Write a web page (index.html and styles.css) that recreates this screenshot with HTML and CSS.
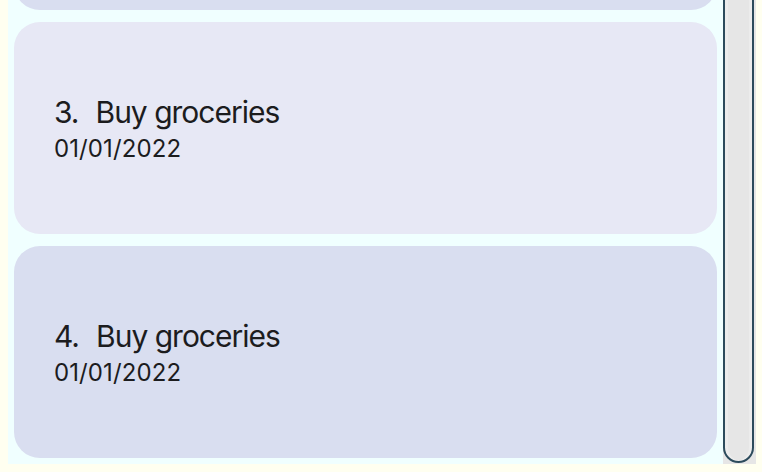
FILE: index.html
```html
<!DOCTYPE html>
<html lang="en">
<head>
<meta charset="utf-8">
<title>Todo list</title>
<link rel="stylesheet" href="styles.css">
</head>
<body>
<div class="app">
  <div class="list">
    <div class="card card-alt">
      <div class="title"><span class="num">2.</span>Buy groceries</div>
      <div class="date">01/01/2022</div>
    </div>
    <div class="card">
      <div class="title"><span class="num">3.</span>Buy groceries</div>
      <div class="date">01/01/2022</div>
    </div>
    <div class="card card-alt">
      <div class="title"><span class="num">4.</span>Buy groceries</div>
      <div class="date">01/01/2022</div>
    </div>
  </div>
  <div class="scrollbar">
    <div class="thumb"></div>
  </div>
</div>
</body>
</html>
```
FILE: styles.css
```css
html, body {
  height: 100%;
}
body {
  margin: 0 6px 8px 8px;
  background: #fffff0;
  font-family: Inter, "Noto Sans", sans-serif;
  color: #1c1c1e;
}
.app {
  height: 464px;
  display: flex;
  background: #f0ffff;
}
.list {
  flex: 1;
  overflow: hidden;
  display: flex;
  flex-direction: column;
  justify-content: flex-end;
  gap: 12px;
  padding: 6px;
}
.card {
  flex: 0 0 212px;
  box-sizing: border-box;
  border-radius: 26px;
  background: #e7e8f5;
  padding: 3px 40px 0;
  display: flex;
  flex-direction: column;
  justify-content: center;
}
.card-alt {
  background: #d9def0;
}
.title {
  font-size: 30px;
  line-height: 36px;
  letter-spacing: -1px;
}
.num {
  margin-right: 17px;
}
.date {
  margin-top: 3px;
  font-size: 24px;
  line-height: 32px;
  letter-spacing: 0.1px;
}
.scrollbar {
  width: 33px;
  background: #e6e6e6;
  overflow: hidden;
  display: flex;
  flex-direction: column;
  justify-content: flex-end;
  padding-bottom: 1px;
  box-sizing: border-box;
}
.thumb {
  flex: 0 0 520px;
  width: 31px;
  box-sizing: border-box;
  border: 2px solid #2c4b5c;
  border-radius: 16px;
  background: #e6e6e6;
  box-shadow: inset 3px 0 0 #ececec, inset -3px 0 0 #ececec;
}
```
